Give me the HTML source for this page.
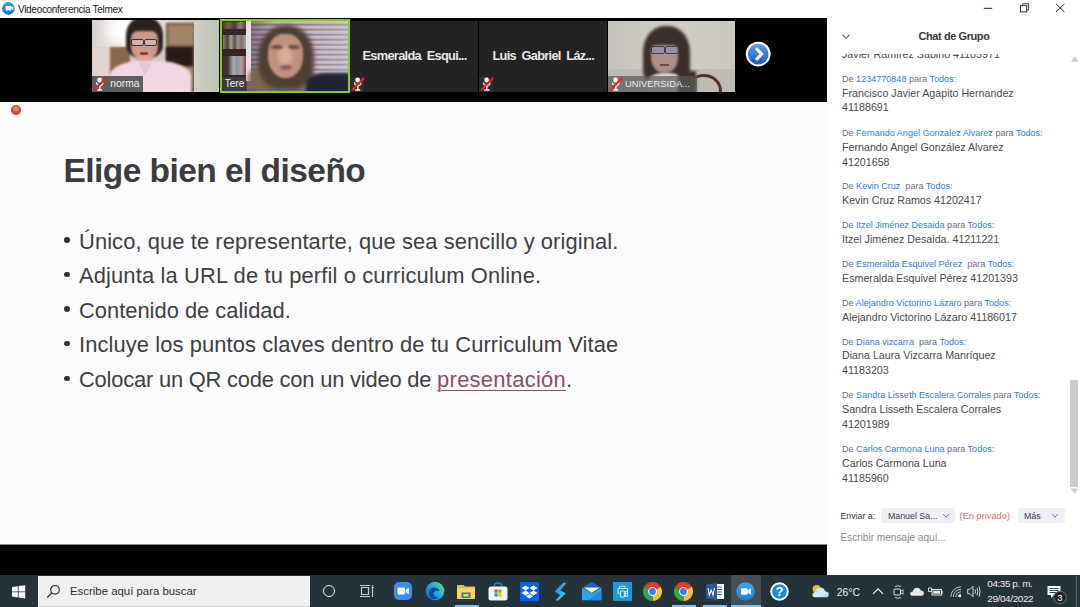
<!DOCTYPE html>
<html><head><meta charset="utf-8"><style>
html,body{margin:0;padding:0;width:1080px;height:607px;overflow:hidden;background:#fff;position:relative}
body{font-family:"Liberation Sans",sans-serif}
.abs{position:absolute}
.t{position:absolute;white-space:nowrap}
</style></head><body>
<div class="abs" style="left:0;top:0;width:827px;height:18px;background:#fff"></div>
<svg class="abs" style="left:1.5px;top:2.2px" width="13" height="13" viewBox="0 0 13 13">
<defs><linearGradient id="zg" x1="0" y1="0" x2="0" y2="1"><stop offset="0" stop-color="#30a0e4"/><stop offset="1" stop-color="#0a74cc"/></linearGradient></defs>
<circle cx="6.4" cy="6.4" r="6.3" fill="url(#zg)"/>
<rect x="3.6" y="4" width="5.6" height="4.5" rx="0.6" fill="#fff"/>
<path d="M9 5.6 L11.3 4.3 V8.2 L9 6.9Z" fill="#fff"/></svg>
<div class="t " style="left:18px;top:4.73px;font-size:10px;line-height:10px;color:#1a1a1a;font-weight:normal;letter-spacing:-0.3px">Videoconferencia Telmex</div>
<div class="abs" style="left:0;top:18px;width:827px;height:84px;background:#000"></div>
<div class="abs" style="left:92px;top:20px;width:127px;height:72px;overflow:hidden;background:#d6cac4">
<div class="abs" style="left:0;top:0;width:110px;height:27px;background:linear-gradient(90deg,#d8d2ce,#f2f0ee 30%,#e6e2de 55%,#d6cec8 80%)"></div>
<div class="abs" style="left:14px;top:-4px;width:30px;height:26px;border-radius:50%;background:#ffffff;filter:blur(4px);opacity:.9"></div>
<div class="abs" style="left:0;top:27px;width:20px;height:45px;background:#e2d4ce;filter:blur(1px)"></div>
<div class="abs" style="left:18px;top:27px;width:20px;height:30px;background:#8e6650;filter:blur(1.2px)"></div>
<div class="abs" style="left:74px;top:3px;width:30px;height:69px;background:#7a5e4a;filter:blur(1.2px)"></div>
<div class="abs" style="left:76px;top:5px;width:26px;height:20px;background:#a28468;filter:blur(1.5px)"></div>
<div class="abs" style="left:74px;top:27px;width:27px;height:19px;background:#2a1a18;filter:blur(1.2px)"></div>
<div class="abs" style="left:84px;top:48px;width:16px;height:22px;background:#b09a80;filter:blur(1.5px)"></div>
<div class="abs" style="left:102px;top:0;width:25px;height:72px;background:linear-gradient(90deg,#cfd2c6,#bcc2b6)"></div>
<div class="abs" style="left:34px;top:-3px;width:37px;height:40px;border-radius:45% 45% 30% 30%;background:#2a211f;filter:blur(1.3px)"></div>
<div class="abs" style="left:39px;top:11px;width:27px;height:29px;border-radius:25% 25% 45% 45%;background:#cc9a88;filter:blur(.9px)"></div>
<div class="abs" style="left:38.5px;top:18.5px;width:13px;height:7px;border-radius:2px;border:1.3px solid #3a3040;background:rgba(210,210,225,.45);box-sizing:border-box;filter:blur(.35px)"></div>
<div class="abs" style="left:52px;top:18.5px;width:13px;height:7px;border-radius:2px;border:1.3px solid #3a3040;background:rgba(210,210,225,.45);box-sizing:border-box;filter:blur(.35px)"></div>
<div class="abs" style="left:48px;top:32px;width:8px;height:2.5px;border-radius:1px;background:#a03838;filter:blur(.5px)"></div>
<div class="abs" style="left:45px;top:36px;width:15px;height:10px;background:#d8a898;filter:blur(1px)"></div>
<div class="abs" style="left:17px;top:41px;width:82px;height:42px;border-radius:38% 38% 0 0;background:#f2d6e4;filter:blur(1.1px)"></div>
<div class="abs" style="left:46px;top:42px;width:14px;height:14px;background:#e8c4d4;filter:blur(1.5px);clip-path:polygon(0 0,100% 0,50% 100%)"></div>
<div class="abs" style="left:0;top:56px;width:50.6px;height:16px;background:rgba(80,80,80,.9)"></div>
</div>
<div class="t " style="left:110.3px;top:79.08px;font-size:10.3px;line-height:10.3px;color:#f2f2f2;font-weight:normal;">norma</div>
<div class="abs" style="left:220px;top:19px;width:130px;height:74px;background:#86cc22"></div>
<div class="abs" style="left:221.8px;top:20.8px;width:126.2px;height:70.5px;overflow:hidden;background:#b8a9b6">
<div class="abs" style="left:0;top:0;width:127px;height:71px;background:repeating-linear-gradient(180deg,#cbbbc9 0,#c4b4c2 2.2px,#968694 3.4px,#8e7e8c 4.2px,#cbbbc9 5px)"></div>
<div class="abs" style="left:0;top:0;width:127px;height:71px;background:linear-gradient(90deg,rgba(60,45,50,.55) 20%,rgba(60,45,50,0) 45%,rgba(255,255,255,0) 70%,rgba(230,235,250,.25))"></div>
<div class="abs" style="left:0;top:0;width:25px;height:71px;background:#332624"></div>
<div class="abs" style="left:1px;top:1px;width:23px;height:7px;background:linear-gradient(90deg,#5a3838,#6a6060,#4a3838,#8a8080,#5a4040);filter:blur(.6px)"></div>
<div class="abs" style="left:1px;top:14px;width:23px;height:14px;background:linear-gradient(90deg,#8a7e78,#504038 20%,#a8a098 35%,#605048 50%,#a09890 65%,#807068 80%,#a8a098);filter:blur(.7px)"></div>
<div class="abs" style="left:1px;top:35px;width:23px;height:19px;background:linear-gradient(90deg,#502828,#403030 20%,#b0a8a8 45%,#8098a8 60%,#b0a0a0 80%,#904040);filter:blur(.7px)"></div>
<div class="abs" style="left:0;top:56px;width:25px;height:15px;background:#3e3a3e"></div>
<div class="abs" style="left:24.5px;top:0;width:4.5px;height:60px;background:#e4e2e6;filter:blur(.4px)"></div>
<div class="abs" style="left:26px;top:40px;width:68px;height:40px;border-radius:45%;background:#7a6852;filter:blur(2.5px)"></div>
<div class="abs" style="left:36px;top:4px;width:56px;height:64px;border-radius:48% 48% 40% 40%;background:#4e3e34;filter:blur(2px)"></div>
<div class="abs" style="left:46px;top:13px;width:35px;height:44px;border-radius:42% 42% 48% 48%;background:#bf927c;filter:blur(1.3px)"></div>
<div class="abs" style="left:56px;top:25px;width:14px;height:20px;border-radius:45%;background:#d8ae98;filter:blur(2px)"></div>
<div class="abs" style="left:49px;top:24px;width:12px;height:4px;border-radius:50%;background:#6a4a40;filter:blur(.9px)"></div>
<div class="abs" style="left:66px;top:24px;width:12px;height:4px;border-radius:50%;background:#6a4a40;filter:blur(.9px)"></div>
<div class="abs" style="left:58px;top:44px;width:12px;height:5px;border-radius:50%;background:#8a5a6a;filter:blur(.9px)"></div>
<div class="abs" style="left:84px;top:52px;width:44px;height:22px;border-radius:45% 0 0 0;background:#222434;filter:blur(1.5px)"></div>
</div>
<div class="t " style="left:224.8px;top:79.33px;font-size:10px;line-height:10px;color:#f2f2f2;font-weight:normal;">Tere</div>
<div class="abs" style="left:350px;top:20.5px;width:127.5px;height:71px;background:#232323"></div>
<div class="abs" style="left:478.5px;top:20.5px;width:128.5px;height:71px;background:#232323"></div>
<div class="t " style="left:362.5px;top:50.36px;font-size:12.8px;line-height:12.8px;color:#e8e8e8;font-weight:bold;letter-spacing:-0.7px">Esmeralda&nbsp; Esqui...</div>
<div class="t " style="left:492.5px;top:50.36px;font-size:12.8px;line-height:12.8px;color:#e8e8e8;font-weight:bold;letter-spacing:-0.72px">Luis&nbsp; Gabriel&nbsp; Láz...</div>
<div class="abs" style="left:350px;top:76.5px;width:14px;height:15px;background:#2e2e2e"></div>
<div class="abs" style="left:478.5px;top:76.5px;width:14px;height:15px;background:#2e2e2e"></div>
<div class="abs" style="left:608px;top:20.5px;width:126.5px;height:71px;overflow:hidden;background:#c6c4ba">
<div class="abs" style="left:0;top:0;width:127px;height:48px;background:linear-gradient(90deg,#c4c2b8,#d0cfc6 45%,#cbc7bd)"></div>
<div class="abs" style="left:0;top:48px;width:127px;height:23px;background:#bebcb2"></div>
<div class="abs" style="left:35px;top:5px;width:47px;height:56px;border-radius:46% 46% 20% 20%;background:#3c2e2a;filter:blur(1.5px)"></div>
<div class="abs" style="left:43px;top:21px;width:27px;height:31px;border-radius:30% 30% 48% 48%;background:#ab8f88;filter:blur(1px)"></div>
<div class="abs" style="left:41px;top:14px;width:31px;height:10px;border-radius:40% 40% 10% 10%;background:#3c2e2a;filter:blur(1px)"></div>
<div class="abs" style="left:43px;top:25px;width:12px;height:6px;border-radius:2px;border:1px solid #4a3a48;background:rgba(120,150,220,.45);filter:blur(.5px)"></div>
<div class="abs" style="left:57px;top:25px;width:12px;height:6px;border-radius:2px;border:1px solid #4a3a48;background:rgba(120,150,220,.45);filter:blur(.5px)"></div>
<div class="abs" style="left:52px;top:43px;width:9px;height:2.5px;background:#7a4a4a;filter:blur(.6px)"></div>
<div class="abs" style="left:40px;top:52px;width:36px;height:22px;border-radius:40% 40% 0 0;background:#ddd8da;filter:blur(1.2px)"></div>
<div class="abs" style="left:70px;top:50px;width:18px;height:24px;background:#3c2e2a;filter:blur(1.5px)"></div>
<div class="abs" style="left:78px;top:53px;width:36px;height:34px;border-radius:50%;border-top:3px solid #5a2c26;border-right:3px solid #5a2c26;border-left:0;border-bottom:0;box-sizing:border-box;filter:blur(.6px)"></div>
<div class="abs" style="left:0;top:55.3px;width:89px;height:15.9px;background:rgba(90,90,90,.72)"></div>
</div>
<div class="t " style="left:625px;top:79.89px;font-size:9.35px;line-height:9.35px;color:#e8e8f4;font-weight:normal;">UNIVERSIDA...</div>
<svg class="abs" style="left:93px;top:76.5px" width="14" height="15" viewBox="0 0 14 15">
<rect x="4.4" y="0.6" width="4.4" height="5" rx="2" fill="#fff"/>
<path d="M3.5 5.5 Q3.5 8.6 6.8 8.6 Q10 8.6 10 5.5" fill="none" stroke="#fff" stroke-width="1.2"/>
<path d="M6.8 8.6 V12.5 M4.3 13 H9.3" fill="none" stroke="#fff" stroke-width="1.4"/>
<path d="M1.2 13 L13.2 1" stroke="#ff1c10" stroke-width="1.9"/></svg>
<svg class="abs" style="left:351px;top:76.5px" width="14" height="15" viewBox="0 0 14 15">
<rect x="4.4" y="0.6" width="4.4" height="5" rx="2" fill="#fff"/>
<path d="M3.5 5.5 Q3.5 8.6 6.8 8.6 Q10 8.6 10 5.5" fill="none" stroke="#fff" stroke-width="1.2"/>
<path d="M6.8 8.6 V12.5 M4.3 13 H9.3" fill="none" stroke="#fff" stroke-width="1.4"/>
<path d="M1.2 13 L13.2 1" stroke="#ff1c10" stroke-width="1.9"/></svg>
<svg class="abs" style="left:479.5px;top:76.5px" width="14" height="15" viewBox="0 0 14 15">
<rect x="4.4" y="0.6" width="4.4" height="5" rx="2" fill="#fff"/>
<path d="M3.5 5.5 Q3.5 8.6 6.8 8.6 Q10 8.6 10 5.5" fill="none" stroke="#fff" stroke-width="1.2"/>
<path d="M6.8 8.6 V12.5 M4.3 13 H9.3" fill="none" stroke="#fff" stroke-width="1.4"/>
<path d="M1.2 13 L13.2 1" stroke="#ff1c10" stroke-width="1.9"/></svg>
<svg class="abs" style="left:609px;top:76.5px" width="14" height="15" viewBox="0 0 14 15">
<rect x="4.4" y="0.6" width="4.4" height="5" rx="2" fill="#fff"/>
<path d="M3.5 5.5 Q3.5 8.6 6.8 8.6 Q10 8.6 10 5.5" fill="none" stroke="#fff" stroke-width="1.2"/>
<path d="M6.8 8.6 V12.5 M4.3 13 H9.3" fill="none" stroke="#fff" stroke-width="1.4"/>
<path d="M1.2 13 L13.2 1" stroke="#ff1c10" stroke-width="1.9"/></svg>
<svg class="abs" style="left:745px;top:41px" width="27" height="27" viewBox="0 0 27 27">
<defs><linearGradient id="ag" x1="0" y1="0" x2="0" y2="1"><stop offset="0" stop-color="#5aa0f0"/><stop offset="1" stop-color="#1a5cc0"/></linearGradient></defs>
<circle cx="13.2" cy="13.1" r="12.4" fill="#fff"/>
<circle cx="13.2" cy="13.1" r="10.3" fill="url(#ag)"/>
<path d="M11 7.3 L16.7 13.1 L11 18.9" fill="none" stroke="#fff" stroke-width="3"/></svg>
<div class="abs" style="left:0;top:102px;width:827px;height:443px;background:#fcfcfe"></div>
<div class="abs" style="left:11px;top:105px;width:9.5px;height:9.5px;border-radius:50%;background:radial-gradient(circle at 50% 35%,#f4a090 0,#e05540 40%,#c03525 80%,#9a3020 100%)"></div>
<div class="t " style="left:63.5px;top:153.64px;font-size:33.5px;line-height:33.5px;color:#3c3c3e;font-weight:bold;letter-spacing:-0.55px">Elige bien el diseño</div>
<div class="abs" style="left:64.4px;top:237.0px;width:5.8px;height:5.8px;border-radius:50%;background:#333"></div>
<div class="t " style="left:79px;top:230.66px;font-size:21.9px;line-height:21.9px;color:#404040;font-weight:normal;letter-spacing:0.09px">Único, que te representarte, que sea sencillo y original.</div>
<div class="abs" style="left:64.4px;top:271.6px;width:5.8px;height:5.8px;border-radius:50%;background:#333"></div>
<div class="t " style="left:79px;top:265.26px;font-size:21.9px;line-height:21.9px;color:#404040;font-weight:normal;letter-spacing:0.14px">Adjunta la URL de tu perfil o curriculum Online.</div>
<div class="abs" style="left:64.4px;top:306.1px;width:5.8px;height:5.8px;border-radius:50%;background:#333"></div>
<div class="t " style="left:79px;top:299.76px;font-size:21.9px;line-height:21.9px;color:#404040;font-weight:normal;letter-spacing:0.0px">Contenido de calidad.</div>
<div class="abs" style="left:64.4px;top:340.6px;width:5.8px;height:5.8px;border-radius:50%;background:#333"></div>
<div class="t " style="left:79px;top:334.26px;font-size:21.9px;line-height:21.9px;color:#404040;font-weight:normal;letter-spacing:0.1px">Incluye los puntos claves dentro de tu Curriculum Vitae</div>
<div class="abs" style="left:64.4px;top:375.6px;width:5.8px;height:5.8px;border-radius:50%;background:#333"></div>
<div class="t " style="left:79px;top:369.26px;font-size:21.9px;line-height:21.9px;color:#404040;font-weight:normal;letter-spacing:0px"><span style="letter-spacing:-0.2px">Colocar un QR code con un video de </span><span style="color:#8c4d6d;letter-spacing:0.3px;text-decoration:underline;text-decoration-thickness:1.3px;text-underline-offset:3px">presentación</span>.</div>
<div class="abs" style="left:0;top:545px;width:827px;height:30px;background:#000"></div>
<div class="abs" style="left:0;top:544px;width:827px;height:1px;background:#8a8a8a"></div>
<div class="abs" style="left:827px;top:0;width:253px;height:575px;background:#fff"></div>
<svg class="abs" style="left:975px;top:0" width="105" height="18" viewBox="0 0 105 18">
<path d="M8.8 8.3 H17.2" stroke="#222" stroke-width="1"/>
<rect x="45.5" y="5.7" width="6.2" height="6.2" fill="none" stroke="#222" stroke-width="0.9"/>
<path d="M47.5 5.7 V3.8 H53.6 V9.9 H51.7" fill="none" stroke="#222" stroke-width="0.9"/>
<path d="M81 3.9 L89.4 11.9 M89.4 3.9 L81 11.9" stroke="#222" stroke-width="1"/></svg>
<svg class="abs" style="left:841px;top:33px" width="10" height="8" viewBox="0 0 10 8">
<path d="M1.5 2 L5 5.3 L8.5 2" fill="none" stroke="#666" stroke-width="1.2"/></svg>
<div class="t " style="left:918.5px;top:30.89px;font-size:11px;line-height:11px;color:#3a3a3a;font-weight:bold;letter-spacing:-0.42px">Chat de Grupo</div>
<div class="abs" style="left:827px;top:53.7px;width:240px;height:441.3px;overflow:hidden">
<div class="t " style="left:15px;top:-5.16px;font-size:10.7px;line-height:10.7px;color:#4a4a4a;font-weight:normal;">Javier Ramírez Sabino 41185971</div>
<div class="t " style="left:15px;top:21.04px;font-size:9.05px;line-height:9.05px;color:#6e6e80;font-weight:normal;"><span style="color:#6e6e80">De </span><span style="color:#2d7be8">1234770848</span><span style="color:#6e6e80"> para </span><span style="color:#2d7be8">Todos:</span></div>
<div class="t " style="left:15px;top:33.84px;font-size:10.7px;line-height:10.7px;color:#4a4a4a;font-weight:normal;">Francisco Javier Agapito Hernandez</div>
<div class="t " style="left:15px;top:48.74px;font-size:10.7px;line-height:10.7px;color:#4a4a4a;font-weight:normal;">41188691</div>
<div class="t " style="left:15px;top:75.24px;font-size:9.05px;line-height:9.05px;color:#6e6e80;font-weight:normal;"><span style="color:#6e6e80">De </span><span style="color:#2d7be8">Fernando Angel Gonzalez Alvarez</span><span style="color:#6e6e80"> para </span><span style="color:#2d7be8">Todos:</span></div>
<div class="t " style="left:15px;top:88.04px;font-size:10.7px;line-height:10.7px;color:#4a4a4a;font-weight:normal;">Fernando Angel González Alvarez</div>
<div class="t " style="left:15px;top:102.94px;font-size:10.7px;line-height:10.7px;color:#4a4a4a;font-weight:normal;">41201658</div>
<div class="t " style="left:15px;top:128.64px;font-size:9.05px;line-height:9.05px;color:#6e6e80;font-weight:normal;"><span style="color:#6e6e80">De </span><span style="color:#2d7be8">Kevin Cruz</span>&nbsp;<span style="color:#6e6e80"> para </span><span style="color:#2d7be8">Todos:</span></div>
<div class="t " style="left:15px;top:141.44px;font-size:10.7px;line-height:10.7px;color:#4a4a4a;font-weight:normal;">Kevin Cruz Ramos 41202417</div>
<div class="t " style="left:15px;top:167.74px;font-size:9.05px;line-height:9.05px;color:#6e6e80;font-weight:normal;"><span style="color:#6e6e80">De </span><span style="color:#2d7be8">Itzel Jiménez Desaida</span><span style="color:#6e6e80"> para </span><span style="color:#2d7be8">Todos:</span></div>
<div class="t " style="left:15px;top:180.54px;font-size:10.7px;line-height:10.7px;color:#4a4a4a;font-weight:normal;">Itzel Jiménez Desaida. 41211221</div>
<div class="t " style="left:15px;top:206.64px;font-size:9.05px;line-height:9.05px;color:#6e6e80;font-weight:normal;"><span style="color:#6e6e80">De </span><span style="color:#2d7be8">Esmeralda Esquivel Pérez</span>&nbsp;<span style="color:#6e6e80"> para </span><span style="color:#2d7be8">Todos:</span></div>
<div class="t " style="left:15px;top:219.44px;font-size:10.7px;line-height:10.7px;color:#4a4a4a;font-weight:normal;">Esmeralda Esquivel Pérez 41201393</div>
<div class="t " style="left:15px;top:245.24px;font-size:9.05px;line-height:9.05px;color:#6e6e80;font-weight:normal;"><span style="color:#6e6e80">De </span><span style="color:#2d7be8">Alejandro Victorino Lázaro</span><span style="color:#6e6e80"> para </span><span style="color:#2d7be8">Todos:</span></div>
<div class="t " style="left:15px;top:258.04px;font-size:10.7px;line-height:10.7px;color:#4a4a4a;font-weight:normal;">Alejandro Victorino Lázaro 41186017</div>
<div class="t " style="left:15px;top:283.84px;font-size:9.05px;line-height:9.05px;color:#6e6e80;font-weight:normal;"><span style="color:#6e6e80">De </span><span style="color:#2d7be8">Diana vizcarra</span>&nbsp;<span style="color:#6e6e80"> para </span><span style="color:#2d7be8">Todos:</span></div>
<div class="t " style="left:15px;top:296.64px;font-size:10.7px;line-height:10.7px;color:#4a4a4a;font-weight:normal;">Diana Laura Vizcarra Manríquez</div>
<div class="t " style="left:15px;top:311.54px;font-size:10.7px;line-height:10.7px;color:#4a4a4a;font-weight:normal;">41183203</div>
<div class="t " style="left:15px;top:337.54px;font-size:9.05px;line-height:9.05px;color:#6e6e80;font-weight:normal;"><span style="color:#6e6e80">De </span><span style="color:#2d7be8">Sandra Lisseth Escalera Corrales</span><span style="color:#6e6e80"> para </span><span style="color:#2d7be8">Todos:</span></div>
<div class="t " style="left:15px;top:350.34px;font-size:10.7px;line-height:10.7px;color:#4a4a4a;font-weight:normal;">Sandra Lisseth Escalera Corrales</div>
<div class="t " style="left:15px;top:365.24px;font-size:10.7px;line-height:10.7px;color:#4a4a4a;font-weight:normal;">41201989</div>
<div class="t " style="left:15px;top:391.24px;font-size:9.05px;line-height:9.05px;color:#6e6e80;font-weight:normal;"><span style="color:#6e6e80">De </span><span style="color:#2d7be8">Carlos Carmona Luna</span><span style="color:#6e6e80"> para </span><span style="color:#2d7be8">Todos:</span></div>
<div class="t " style="left:15px;top:404.04px;font-size:10.7px;line-height:10.7px;color:#4a4a4a;font-weight:normal;">Carlos Carmona Luna</div>
<div class="t " style="left:15px;top:418.94px;font-size:10.7px;line-height:10.7px;color:#4a4a4a;font-weight:normal;">41185960</div>
</div>
<div class="abs" style="left:1070.4px;top:380.4px;width:7.9px;height:106.5px;background:#cbcbcb"></div>
<svg class="abs" style="left:1069.8px;top:55px" width="10" height="8" viewBox="0 0 10 8"><path d="M0.8 6.8 L4.8 1.2 L8.8 6.8Z" fill="#cdcdcd"/></svg>
<svg class="abs" style="left:1070px;top:487.5px" width="9" height="7" viewBox="0 0 9 7"><path d="M0.8 0.5 L4.5 6 L8.2 0.5Z" fill="#cbcbcb"/></svg>
<div class="t " style="left:840.4px;top:512.15px;font-size:8.8px;line-height:8.8px;color:#3a3a3a;font-weight:normal;">Enviar a:</div>
<div class="abs" style="left:881.4px;top:507.7px;width:73.6px;height:15.1px;border-radius:2.5px;background:#eff0f6"></div>
<div class="t " style="left:887.9px;top:512.11px;font-size:8.85px;line-height:8.85px;color:#3a3a4a;font-weight:normal;">Manuel Sa...</div>
<svg class="abs" style="left:942px;top:513px" width="8" height="6" viewBox="0 0 8 6"><path d="M1 1.2 L4 4.2 L7 1.2" fill="none" stroke="#3a80e0" stroke-width="1"/></svg>
<div class="t " style="left:959.6px;top:511.77px;font-size:9.25px;line-height:9.25px;color:#f0626a;font-weight:normal;">(En privado)</div>
<div class="abs" style="left:1017.5px;top:507.7px;width:47px;height:15.1px;border-radius:2.5px;background:#eff0f6"></div>
<div class="t " style="left:1024px;top:512.11px;font-size:8.85px;line-height:8.85px;color:#3a3a4a;font-weight:normal;">Más</div>
<svg class="abs" style="left:1051px;top:513px" width="8" height="6" viewBox="0 0 8 6"><path d="M1 1.2 L4 4.2 L7 1.2" fill="none" stroke="#3a80e0" stroke-width="1"/></svg>
<div class="t " style="left:840.4px;top:533.25px;font-size:10.1px;line-height:10.1px;color:#8a8a9a;font-weight:normal;">Escribir mensaje aquí...</div>
<div class="abs" style="left:0;top:575px;width:1080px;height:32px;background:#243239"></div>
<svg class="abs" style="left:12px;top:584.5px" width="14" height="14" viewBox="0 0 14 14">
<path d="M0 2 L5.8 1.2 V6.4 H0Z M6.6 1.1 L13.2 0.2 V6.4 H6.6Z M0 7.2 H5.8 V12.4 L0 11.6Z M6.6 7.2 H13.2 V13.4 L6.6 12.5Z" fill="#fff"/></svg>
<div class="abs" style="left:38px;top:575.5px;width:272px;height:31.5px;background:#f0f0f0;border-bottom:1px solid #d0d0d0;box-sizing:border-box"></div>
<svg class="abs" style="left:46px;top:584px" width="15" height="15" viewBox="0 0 15 15">
<circle cx="9" cy="5.8" r="4.3" fill="none" stroke="#222" stroke-width="1.1"/>
<path d="M5.9 8.9 L1.3 13.5" stroke="#222" stroke-width="1.2"/></svg>
<div class="t " style="left:70px;top:586.35px;font-size:11.4px;line-height:11.4px;color:#303030;font-weight:normal;">Escribe aquí para buscar</div>
<div class="abs" style="left:322.5px;top:584.5px;width:12.8px;height:12.8px;border-radius:50%;border:1.8px solid #eee;box-sizing:border-box"></div>
<svg class="abs" style="left:359px;top:584px" width="16" height="14" viewBox="0 0 16 14">
<path d="M1 1.5 H11 M1 12.5 H11 M2.5 3.5 H9.5 V10.5 H2.5Z" fill="none" stroke="#c8ccd0" stroke-width="1.2"/>
<path d="M13.5 1 V2.5 M13.5 5 V13" stroke="#c8ccd0" stroke-width="1.2"/><rect x="12.6" y="2.8" width="1.8" height="1.8" fill="#fff"/></svg>
<svg class="abs" style="left:394.3px;top:582.2px" width="18" height="18" viewBox="0 0 18 18">
<rect x="0" y="0" width="18" height="18" rx="5" fill="#3c8cf6"/>
<rect x="3.5" y="5.5" width="7.5" height="7" rx="1.5" fill="#fff"/><path d="M11.5 8 L14.8 5.8 V12.2 L11.5 10Z" fill="#fff"/></svg>
<svg class="abs" style="left:425px;top:581px" width="20" height="20" viewBox="0 0 20 20">
<defs><linearGradient id="eg" x1="1" y1="0.2" x2="0" y2="0.9"><stop offset="0" stop-color="#6ad870"/><stop offset="0.45" stop-color="#20a8e0"/><stop offset="1" stop-color="#0e6ac8"/></linearGradient></defs>
<circle cx="10" cy="10" r="9.3" fill="url(#eg)"/>
<path d="M4 12 Q4 7 9 6.5 Q14 6.5 14.5 10 Q12 9 9.5 10.5 Q7.5 12.5 9.5 15 Q11 17 14 16.5 Q9 19.5 5.5 16.5 Q3.5 14.5 4 12Z" fill="#0d4a9a"/>
</svg>
<svg class="abs" style="left:457px;top:583.5px" width="18" height="16" viewBox="0 0 18 16">
<path d="M0 1 H6.5 L8 2.5 H18 V15 H0Z" fill="#e8b84a"/><rect x="0" y="4" width="18" height="11" fill="#f8d36a"/>
<rect x="4.5" y="8.5" width="9" height="5.5" fill="#2a7ad0"/><rect x="6.5" y="10" width="5" height="2.5" fill="#f8d36a"/></svg>
<div class="abs" style="left:455px;top:605px;width:24px;height:2px;background:#84bff0"></div>
<svg class="abs" style="left:488px;top:582px" width="20" height="19" viewBox="0 0 20 19">
<path d="M6 5 Q6 1 10 1 Q14 1 14 5" fill="none" stroke="#1a8ad8" stroke-width="1.3"/>
<rect x="0.5" y="4.5" width="19" height="14" rx="2.5" fill="#f2f2f2"/>
<rect x="6.5" y="7.5" width="3.2" height="3.2" fill="#f25022"/><rect x="10.3" y="7.5" width="3.2" height="3.2" fill="#7fba00"/>
<rect x="6.5" y="11.3" width="3.2" height="3.2" fill="#00a4ef"/><rect x="10.3" y="11.3" width="3.2" height="3.2" fill="#ffb900"/></svg>
<svg class="abs" style="left:520px;top:581.6px" width="19" height="19" viewBox="0 0 19 19">
<rect width="19" height="19" fill="#0061fe"/>
<path d="M5.5 4 L9.5 6.5 L5.5 9 L1.5 6.5Z M13.5 4 L17.5 6.5 L13.5 9 L9.5 6.5Z M5.5 9 L9.5 11.5 L5.5 14 L1.5 11.5Z M13.5 9 L17.5 11.5 L13.5 14 L9.5 11.5Z M5.8 14.8 L9.5 12.5 L13.2 14.8 L9.5 17Z" fill="#fff" transform="translate(0,-0.5)"/></svg>
<svg class="abs" style="left:554px;top:581.5px" width="13" height="19" viewBox="0 0 13 19">
<defs><linearGradient id="pa" x1="0" y1="0" x2="1" y2="1"><stop offset="0" stop-color="#3a6ee8"/><stop offset="1" stop-color="#3ee0f0"/></linearGradient></defs>
<path d="M9.6 0.3 L12.4 1.2 L6.3 8.2 L11.9 11.2 L4.2 18.8 L1.6 18.2 L6.2 12.9 L0.6 9.4Z" fill="url(#pa)"/></svg>
<svg class="abs" style="left:582px;top:581.8px" width="20" height="19" viewBox="0 0 20 19">
<path d="M0 5.5 L9.7 0 L19.4 5.5Z" fill="#1566c8"/>
<path d="M1.5 5.5 H18 L9.7 11Z" fill="#f4f4f4"/>
<path d="M0 5.5 L9.7 11.5 L19.4 5.5 V18.3 H0Z" fill="#2aa6ee"/>
<path d="M19.4 18.3 H6 L19.4 8Z" fill="#1a88dc" opacity=".8"/></svg>
<svg class="abs" style="left:612.7px;top:581.5px" width="19.5" height="19.5" viewBox="0 0 19.5 19.5">
<rect width="19.5" height="19.5" fill="#1a9ad8"/>
<path d="M6.5 6 V4.3 H12 V6 M5 6.5 H14.5 V11.5 H12 M5 6.5 V11.5 H7 M7.5 9 H11.5 V15 H7.5Z M12.5 9.5 H14.5 V14.5 H12.5Z" fill="none" stroke="#e0f0fa" stroke-width=".9"/></svg>
<svg class="abs" style="left:643.3px;top:581.8px" width="19" height="19" viewBox="-9.5 -9.5 19 19">
<path d="M0 0 L-8.23 -4.75 A9.5 9.5 0 0 1 8.23 -4.75Z" fill="#e33b2e"/>
<path d="M0 0 L8.23 -4.75 A9.5 9.5 0 0 1 0 9.5Z" fill="#fbc02d"/>
<path d="M0 0 L0 9.5 A9.5 9.5 0 0 1 -8.23 -4.75Z" fill="#2da94f"/>
<circle r="4.4" fill="#fff"/><circle r="3.4" fill="#3b7ce8"/></svg>
<svg class="abs" style="left:674.2px;top:581.8px" width="19" height="19" viewBox="-9.5 -9.5 19 19">
<path d="M0 0 L-8.23 -4.75 A9.5 9.5 0 0 1 8.23 -4.75Z" fill="#e33b2e"/>
<path d="M0 0 L8.23 -4.75 A9.5 9.5 0 0 1 0 9.5Z" fill="#fbc02d"/>
<path d="M0 0 L0 9.5 A9.5 9.5 0 0 1 -8.23 -4.75Z" fill="#2da94f"/>
<circle r="4.4" fill="#fff"/><circle r="3.4" fill="#3b7ce8"/></svg>
<div class="abs" style="left:672.3px;top:605px;width:23.4px;height:2px;background:#84bff0"></div>
<svg class="abs" style="left:706px;top:582.8px" width="18" height="17" viewBox="0 0 18 17">
<rect x="6" y="1" width="12" height="15" fill="#fff"/><path d="M8 4 H16 M8 6.5 H16 M8 9 H16 M8 11.5 H16" stroke="#41659f" stroke-width="1"/>
<path d="M0 1.5 L11 0 V17 L0 15.5Z" fill="#2b579a"/>
<path d="M2 5 L3.3 12 L5.2 7 L7 12 L8.5 5" fill="none" stroke="#fff" stroke-width="1.1"/></svg>
<div class="abs" style="left:703.3px;top:605px;width:23.4px;height:2px;background:#84bff0"></div>
<div class="abs" style="left:730.5px;top:575px;width:30px;height:32px;background:#464e53"></div>
<svg class="abs" style="left:736px;top:581.5px" width="19" height="19" viewBox="0 0 19 19">
<defs><linearGradient id="zt" x1="0" y1="0" x2="0" y2="1"><stop offset="0" stop-color="#40aaf0"/><stop offset="1" stop-color="#1a7fd6"/></linearGradient></defs><circle cx="9.5" cy="9.5" r="9.3" fill="url(#zt)"/>
<rect x="5" y="6.3" width="6.5" height="6.4" rx="0.8" fill="#fff"/><path d="M11.3 8.6 L15 6.3 V12.7 L11.3 10.4Z" fill="#fff"/></svg>
<div class="abs" style="left:730.5px;top:605px;width:30px;height:2px;background:#84bff0"></div>
<svg class="abs" style="left:769.5px;top:581.5px" width="19" height="19" viewBox="0 0 19 19">
<circle cx="9.5" cy="9.5" r="8.3" fill="#1a8cd8" stroke="#fff" stroke-width="1.9"/>
<text x="9.5" y="14.3" text-anchor="middle" font-family="Liberation Sans" font-weight="bold" font-size="13" fill="#fff">?</text></svg>
<svg class="abs" style="left:812px;top:584px" width="17" height="14" viewBox="0 0 17 14">
<defs><linearGradient id="wc" x1="0" y1="0" x2="1" y2="1"><stop offset="0" stop-color="#a8d8f8"/><stop offset=".5" stop-color="#d8eefc"/><stop offset="1" stop-color="#b0d8f4"/></linearGradient></defs>
<circle cx="4.6" cy="5" r="4" fill="#f0b828"/>
<path d="M2.8 13.3 Q0.2 13.3 0.4 10.6 Q0.7 8.3 3.2 8.1 Q3.8 3.6 8.4 3.6 Q12.2 3.8 13 7.2 Q16.8 7.4 16.8 10.4 Q16.7 13.3 14 13.3Z" fill="url(#wc)"/></svg>
<div class="t " style="left:836.7px;top:588.00px;font-size:10.4px;line-height:10.4px;color:#eeeeee;font-weight:normal;">26°C</div>
<svg class="abs" style="left:872px;top:587px" width="12" height="8" viewBox="0 0 12 8"><path d="M1 6.8 L6 1.8 L11 6.8" fill="none" stroke="#fff" stroke-width="1.1"/></svg>
<svg class="abs" style="left:892.5px;top:584.5px" width="11" height="14" viewBox="0 0 11 14">
<path d="M2 1.5 Q5 0 8 1.5 M2 12.5 Q5 14 8 12.5" fill="none" stroke="#e0e0e0" stroke-width=".9"/>
<rect x="1" y="4" width="6.5" height="6" rx="1" fill="none" stroke="#e0e0e0" stroke-width="1"/><path d="M8 5.8 L10 4.8 V9.2 L8 8.2" fill="none" stroke="#e0e0e0" stroke-width=".9"/></svg>
<svg class="abs" style="left:909.5px;top:586.5px" width="14" height="9" viewBox="0 0 14 9">
<path d="M2.5 8.8 Q0 8.8 0.2 6.5 Q0.5 4.5 2.8 4.6 Q3.5 1 7 0.8 Q10 0.8 10.8 3.5 Q13.8 3.5 13.9 6.3 Q13.9 8.8 11.5 8.8Z" fill="#e8e8e8"/></svg>
<svg class="abs" style="left:927.5px;top:587px" width="15" height="9" viewBox="0 0 15 9">
<rect x="4" y="2.5" width="9.5" height="5.5" fill="none" stroke="#e8e8e8" stroke-width="1"/><rect x="13.5" y="4" width="1.2" height="2.5" fill="#e8e8e8"/>
<rect x="5.2" y="3.7" width="7" height="3" fill="#e8e8e8"/><path d="M0.5 1 H3.5 V4.5 H0.5Z" fill="none" stroke="#e8e8e8" stroke-width=".9"/></svg>
<svg class="abs" style="left:949.5px;top:586px" width="12" height="12" viewBox="0 0 12 12">
<path d="M0.8 11 A10.2 10.2 0 0 1 11 0.8 M3.3 11 A7.7 7.7 0 0 1 11 3.3 M5.8 11 A5.2 5.2 0 0 1 11 5.8 M8.2 11 A2.8 2.8 0 0 1 11 8.2" fill="none" stroke="#d8d8d8" stroke-width=".9"/><circle cx="10" cy="10" r="1.2" fill="#fff"/></svg>
<svg class="abs" style="left:966.5px;top:585px" width="14" height="13" viewBox="0 0 14 13">
<path d="M0.7 4.3 H3 L6 1.3 V11.7 L3 8.7 H0.7Z" fill="none" stroke="#e8e8e8" stroke-width=".9"/>
<path d="M8 4.3 Q9 6.5 8 8.7 M10 2.8 Q11.8 6.5 10 10.2 M12 1.3 Q14.3 6.5 12 11.7" fill="none" stroke="#e8e8e8" stroke-width=".9"/></svg>
<div class="t " style="left:987.3px;top:578.92px;font-size:9.9px;line-height:9.9px;color:#eeeeee;font-weight:normal;letter-spacing:-0.4px">04:35 p. m.</div>
<div class="t " style="left:987.3px;top:593.62px;font-size:9.9px;line-height:9.9px;color:#eeeeee;font-weight:normal;letter-spacing:-0.35px">29/04/2022</div>
<svg class="abs" style="left:1046px;top:584.5px" width="22" height="21" viewBox="0 0 22 21">
<path d="M1.5 1 H14.5 V10 H8 L5 13 V10 H1.5Z" fill="#fff"/>
<path d="M3.5 3.5 H12.5 M3.5 5.5 H12.5 M3.5 7.5 H10" stroke="#243239" stroke-width=".9"/>
<circle cx="14" cy="12.5" r="6.3" fill="#222" stroke="#6a7378" stroke-width="1"/>
<text x="14" y="16" text-anchor="middle" font-family="Liberation Sans" font-size="9.5" fill="#fff">3</text></svg>
<div class="abs" style="left:1076px;top:576px;width:1px;height:31px;background:#5a6468"></div>
</body></html>
